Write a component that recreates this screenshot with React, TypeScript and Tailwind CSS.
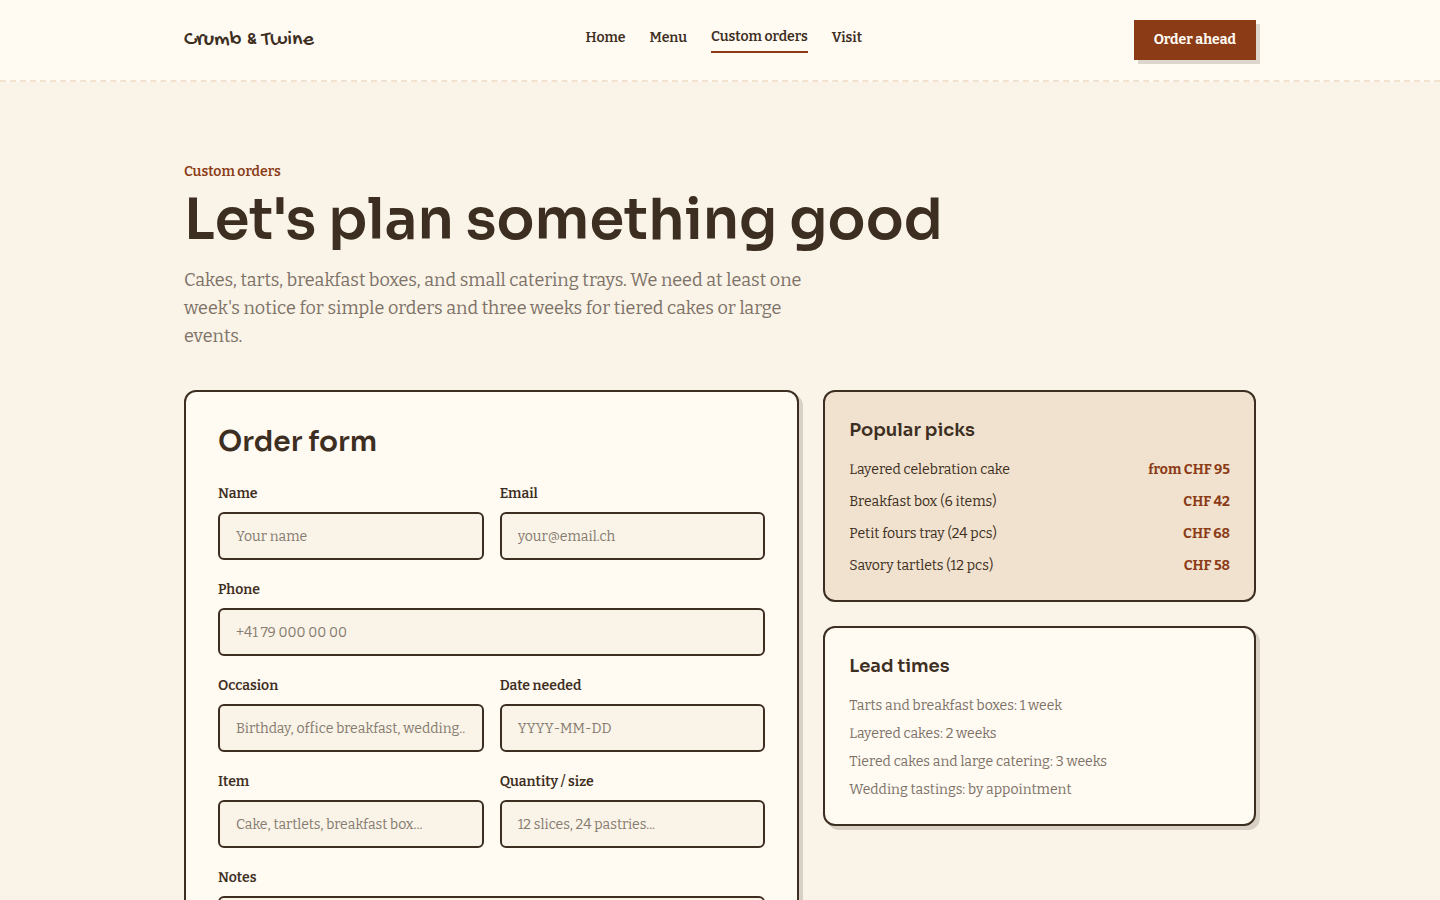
import type { TextareaHTMLAttributes, InputHTMLAttributes } from "react";

const NAV = ["Home", "Menu", "Custom orders", "Visit"];

const PICKS = [
  { name: "Layered celebration cake", price: "from CHF 95" },
  { name: "Breakfast box (6 items)", price: "CHF 42" },
  { name: "Petit fours tray (24 pcs)", price: "CHF 68" },
  { name: "Savory tartlets (12 pcs)", price: "CHF 58" },
];

const LEAD_TIMES = [
  "Tarts and breakfast boxes: 1 week",
  "Layered cakes: 2 weeks",
  "Tiered cakes and large catering: 3 weeks",
  "Wedding tastings: by appointment",
];

const control =
  "block w-full rounded-md border-2 border-[#3d2e22] bg-[#faf3e7] px-4 text-sm leading-[21px] text-[#3d2e22] placeholder:text-[#857b70] placeholder:opacity-100";

interface FieldProps extends InputHTMLAttributes<HTMLInputElement> {
  id: string;
  label: string;
}

function Field({ id, label, ...rest }: FieldProps) {
  return (
    <div className="flex min-w-0 flex-col gap-2">
      <label htmlFor={id} className="text-sm font-semibold">
        {label}
      </label>
      <input id={id} className={`${control} h-12`} {...rest} />
    </div>
  );
}

interface AreaProps extends TextareaHTMLAttributes<HTMLTextAreaElement> {
  id: string;
  label: string;
}

function Area({ id, label, ...rest }: AreaProps) {
  return (
    <div className="flex flex-col gap-2">
      <label htmlFor={id} className="text-sm font-semibold">
        {label}
      </label>
      <textarea id={id} rows={4} className={`${control} py-3`} {...rest} />
    </div>
  );
}

function Header() {
  return (
    <header className="border-b-2 border-dashed border-[#f0e2ce] bg-[#fffaf2]">
      <div className="mx-auto flex h-20 max-w-6xl items-center justify-between px-10">
        <a href="#" className="font-['Gochi_Hand',cursive] text-[22px] leading-8">
          Crumb &amp; Twine
        </a>
        <nav className="flex items-center gap-6 text-sm font-semibold">
          {NAV.map((item) => (
            <a
              key={item}
              href="#"
              className={item === "Custom orders" ? "border-b-2 border-[#8b3c17] pb-1" : "pb-1"}
            >
              {item}
            </a>
          ))}
        </nav>
        <button
          type="button"
          className="h-10 bg-[#8b3c17] px-5 text-sm font-bold text-[#fffaf2] shadow-[4px_4px_0_0_#dcd6cd]"
        >
          Order ahead
        </button>
      </div>
    </header>
  );
}

function OrderForm() {
  return (
    <form className="rounded-xl border-2 border-[#3d2e22] bg-[#fffaf2] p-8 shadow-[4px_4px_0_0_#d8d0c4] lg:col-span-7">
      <h2 className="font-['Sora',sans-serif] text-[28px] leading-9 font-semibold">Order form</h2>
      <div className="mt-6 flex flex-col gap-5">
        <div className="grid grid-cols-2 gap-4">
          <Field id="name" label="Name" placeholder="Your name" />
          <Field id="email" label="Email" type="email" placeholder="your@email.ch" />
        </div>
        <Field id="phone" label="Phone" type="tel" placeholder="+41 79 000 00 00" />
        <div className="grid grid-cols-2 gap-4">
          <Field id="occasion" label="Occasion" placeholder="Birthday, office breakfast, wedding.." />
          <Field id="date" label="Date needed" placeholder="YYYY-MM-DD" />
        </div>
        <div className="grid grid-cols-2 gap-4">
          <Field id="item" label="Item" placeholder="Cake, tartlets, breakfast box..." />
          <Field id="quantity" label="Quantity / size" placeholder="12 slices, 24 pastries..." />
        </div>
        <Area id="notes" label="Notes" />
      </div>
    </form>
  );
}

function PopularPicks() {
  return (
    <section className="rounded-xl border-2 border-[#3d2e22] bg-[#f0e2ce] p-6">
      <h3 className="font-['Sora',sans-serif] text-lg leading-7 font-semibold">Popular picks</h3>
      <ul className="mt-4 flex flex-col gap-3 text-sm">
        {PICKS.map((pick) => (
          <li key={pick.name} className="flex justify-between gap-4">
            <span>{pick.name}</span>
            <span className="font-bold whitespace-nowrap text-[#8b3c17]">{pick.price}</span>
          </li>
        ))}
      </ul>
    </section>
  );
}

function LeadTimes() {
  return (
    <section className="rounded-xl border-2 border-[#3d2e22] bg-[#fffaf2] p-6 shadow-[4px_4px_0_0_#d8d0c4]">
      <h3 className="font-['Sora',sans-serif] text-lg leading-7 font-semibold">Lead times</h3>
      <ul className="mt-4 flex flex-col gap-2 text-sm text-[#7d7267]">
        {LEAD_TIMES.map((line) => (
          <li key={line}>{line}</li>
        ))}
      </ul>
    </section>
  );
}

export default function App() {
  return (
    <div className="min-h-screen bg-[#faf3e7] font-['Bitter',serif] text-[#3d2e22]">
      <Header />
      <main className="mx-auto max-w-6xl px-10 py-20">
        <p className="text-sm font-semibold text-[#8b3c17]">Custom orders</p>
        <h1 className="mt-2 font-['Sora',sans-serif] text-[56px] leading-[60px] font-semibold">
          Let's plan something good
        </h1>
        <p className="mt-4 max-w-[640px] text-lg leading-7 text-[#7d7267]">
          Cakes, tarts, breakfast boxes, and small catering trays. We need at least one week's notice for
          simple orders and three weeks for tiered cakes or large events.
        </p>
        <div className="mt-10 grid items-start gap-6 lg:grid-cols-12">
          <OrderForm />
          <div className="flex flex-col gap-6 lg:col-span-5">
            <PopularPicks />
            <LeadTimes />
          </div>
        </div>
      </main>
    </div>
  );
}
